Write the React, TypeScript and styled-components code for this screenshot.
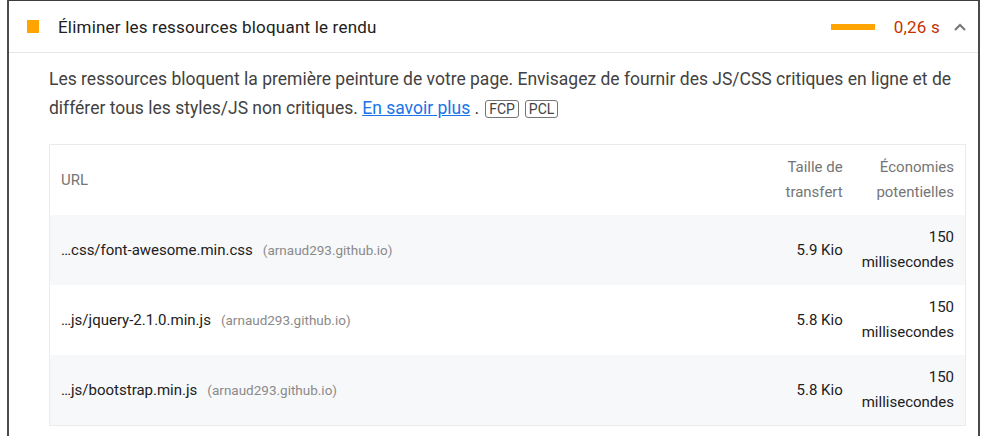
import React from 'react';
import styled, { createGlobalStyle } from 'styled-components';

const GlobalStyle = createGlobalStyle`
  html, body {
    margin: 0;
    padding: 0;
    background: #ffffff;
  }
  body {
    font-family: Roboto, "Liberation Sans", Arial, sans-serif;
    -webkit-font-smoothing: antialiased;
  }
`;

const Frame = styled.div`
  margin-left: 7px;
  width: 973px;
  height: 436px;
  box-sizing: border-box;
  border-top: 1px solid #3c3c3c;
  border-left: 2px solid #4a4a4a;
  border-right: 2px solid #4a4a4a;
  background: #ffffff;
  overflow: hidden;
`;

const Header = styled.div`
  display: flex;
  align-items: center;
  height: 51px;
  padding: 0 11px 0 18px;
  border-bottom: 1px solid #e6e6e6;
`;

const StatusSquare = styled.span`
  width: 12px;
  height: 13px;
  background: #ffa400;
  flex-shrink: 0;
  margin-right: 19px;
`;

const Title = styled.div`
  flex: 1;
  font-size: 17px;
  letter-spacing: 0.2px;
  color: #212121;
`;

const MetricBar = styled.span`
  width: 44px;
  height: 6px;
  background: #ffa400;
  margin-right: 19px;
`;

const MetricValue = styled.span`
  font-size: 17px;
  letter-spacing: 0.2px;
  color: #c33300;
  margin-right: 13px;
`;

const Chevron = styled.svg`
  width: 14px;
  height: 10px;
`;

const Body = styled.div`
  padding: 12px 12px 0 40px;
`;

const Description = styled.p`
  margin: 0 0 21px;
  font-size: 17.5px;
  line-height: 29px;
  white-space: nowrap;
  color: #424242;
`;

const Link = styled.a`
  color: #1a73e8;
  text-decoration: underline;
`;

const Badge = styled.span`
  display: inline-block;
  font-size: 14px;
  line-height: 16px;
  padding: 0 3px;
  border: 1px solid #757575;
  border-radius: 3px;
  color: #424242;
  margin-left: 6px;
`;

const Table = styled.table`
  width: 100%;
  border-collapse: collapse;
  border: 1px solid #ebebeb;
  font-size: 15px;
`;

const HeadCell = styled.th<{ $right?: boolean }>`
  height: 70px;
  padding: ${({ $right }) => ($right ? '0 11px 0 8px' : '0 11px')};
  font-weight: 400;
  color: #757575;
  line-height: 25px;
  text-align: ${({ $right }) => ($right ? 'right' : 'left')};
  vertical-align: middle;
`;

const Row = styled.tr<{ $shaded: boolean }>`
  background: ${({ $shaded }) => ($shaded ? '#f7f8fa' : '#ffffff')};
`;

const Cell = styled.td<{ $right?: boolean }>`
  height: 70px;
  padding: ${({ $right }) => ($right ? '0 11px 0 8px' : '0 11px')};
  color: #212121;
  line-height: 25px;
  text-align: ${({ $right }) => ($right ? 'right' : 'left')};
  vertical-align: middle;
`;

const Host = styled.span`
  color: #8a8a8a;
  font-size: 13.5px;
  margin-left: 10px;
`;

interface Resource {
  url: string;
  host: string;
  size: string;
  savings: string;
}

const resources: Resource[] = [
  { url: '…css/font-awesome.min.css', host: '(arnaud293.github.io)', size: '5.9 Kio', savings: '150' },
  { url: '…js/jquery-2.1.0.min.js', host: '(arnaud293.github.io)', size: '5.8 Kio', savings: '150' },
  { url: '…js/bootstrap.min.js', host: '(arnaud293.github.io)', size: '5.8 Kio', savings: '150' },
];

const App: React.FC = () => (
  <>
    <GlobalStyle />
    <Frame>
      <Header>
        <StatusSquare />
        <Title>Éliminer les ressources bloquant le rendu</Title>
        <MetricBar />
        <MetricValue>0,26 s</MetricValue>
        <Chevron viewBox="0 0 14 10">
          <polyline points="2,8 7,3 12,8" fill="none" stroke="#757575" strokeWidth="2" />
        </Chevron>
      </Header>
      <Body>
        <Description>
          Les ressources bloquent la première peinture de votre page. Envisagez de fournir des JS/CSS critiques en ligne et de
          <br />
          différer tous les styles/JS non critiques. <Link href="#">En savoir plus</Link> .
          <Badge>FCP</Badge>
          <Badge>PCL</Badge>
        </Description>
        <Table>
          <thead>
            <tr>
              <HeadCell>URL</HeadCell>
              <HeadCell $right>
                Taille de
                <br />
                transfert
              </HeadCell>
              <HeadCell $right style={{ width: 90 }}>
                Économies
                <br />
                potentielles
              </HeadCell>
            </tr>
          </thead>
          <tbody>
            {resources.map((r, i) => (
              <Row key={r.url} $shaded={i % 2 === 0}>
                <Cell>
                  {r.url}
                  <Host>{r.host}</Host>
                </Cell>
                <Cell $right>{r.size}</Cell>
                <Cell $right>
                  {r.savings}
                  <br />
                  millisecondes
                </Cell>
              </Row>
            ))}
          </tbody>
        </Table>
      </Body>
    </Frame>
  </>
);

export default App;
